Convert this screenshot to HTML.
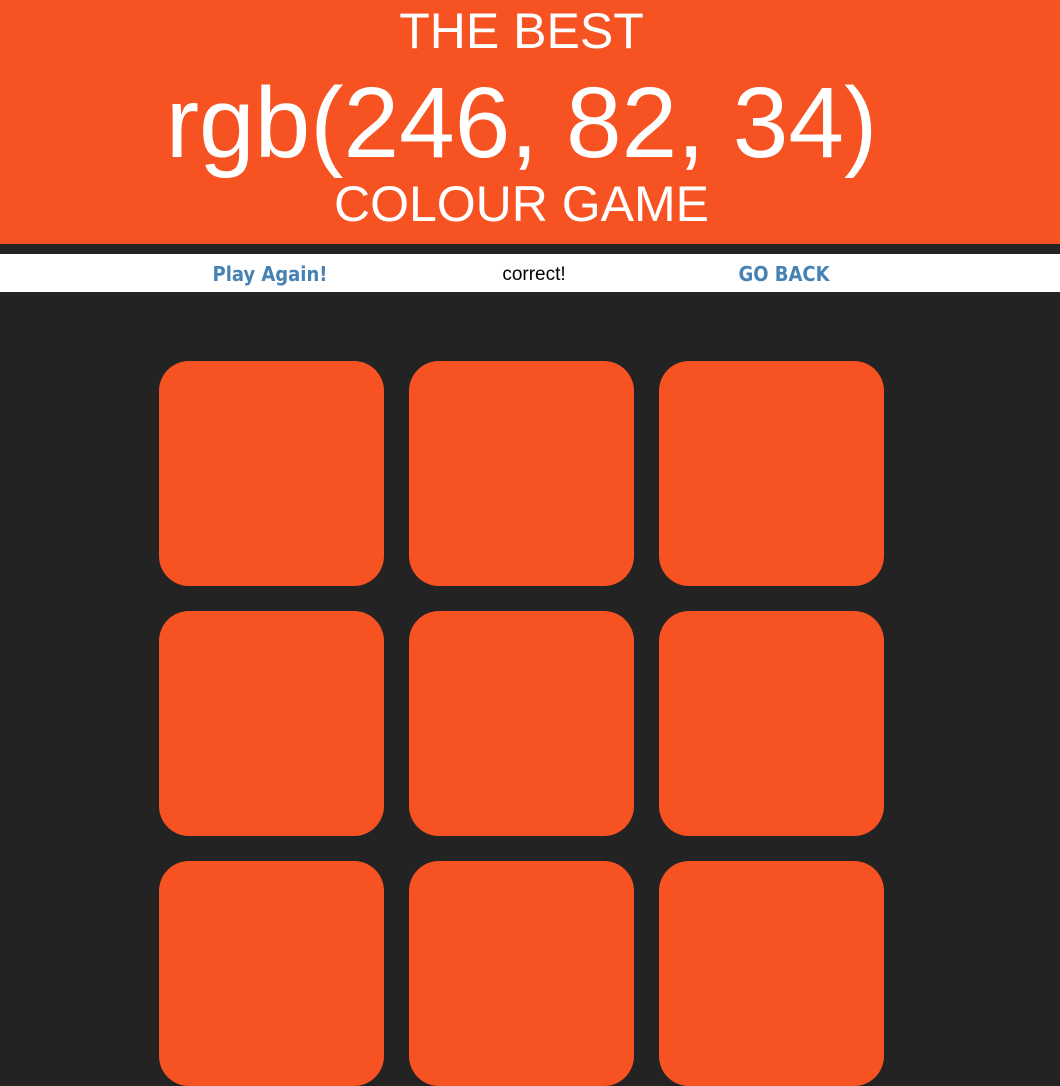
<!DOCTYPE html>
<html><head><style>
body{margin:0;background:#232323;width:1060px;height:930px;overflow:hidden;font-family:"Liberation Sans",sans-serif;}
.h{position:absolute;left:0;top:0;width:1060px;height:244px;background:rgb(246,82,34);color:#fff;text-align:center;}
.h div{position:absolute;left:0;width:1043px;}
.nav{position:absolute;left:0;top:254px;width:1060px;height:38px;background:#fff;font-size:18px;}
.nav span{position:absolute;top:8px;transform:translateX(-50%);white-space:nowrap;}
.b{color:#4682b4;font-weight:bold;font-family:"DejaVu Sans Condensed","DejaVu Sans",sans-serif;font-size:20px;}
.sq{position:absolute;width:225px;height:225px;border-radius:30px;background:rgb(246,82,34);}
</style></head><body>
<div class="h">
<div style="top:3px;font-size:50px;line-height:56px;">THE BEST</div>
<div style="top:68px;font-size:100px;line-height:110px;">rgb(246, 82, 34)</div>
<div style="top:176px;font-size:50px;line-height:56px;">COLOUR GAME</div>
</div>
<div class="nav">
<span class="b" style="left:270px;">Play Again!</span>
<span style="left:534px;font-size:19px;top:10px;">correct!</span>
<span class="b" style="left:784px;">GO BACK</span>
</div>
<div class="sq" style="left:159px;top:361px"></div>
<div class="sq" style="left:409px;top:361px"></div>
<div class="sq" style="left:659px;top:361px"></div>
<div class="sq" style="left:159px;top:611px"></div>
<div class="sq" style="left:409px;top:611px"></div>
<div class="sq" style="left:659px;top:611px"></div>
<div class="sq" style="left:159px;top:861px"></div>
<div class="sq" style="left:409px;top:861px"></div>
<div class="sq" style="left:659px;top:861px"></div>
</body></html>
